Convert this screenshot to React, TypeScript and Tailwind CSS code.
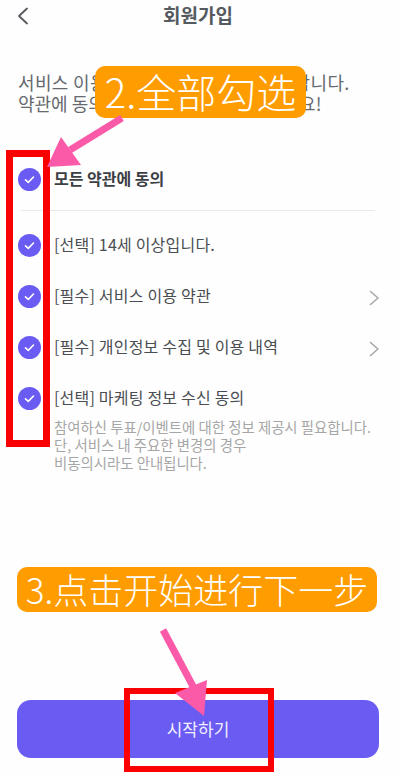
import React from "react";

const KR = "font-['Noto_Sans_CJK_KR','Noto_Sans',sans-serif]";

function Check() {
  return (
    <span className="flex h-[23px] w-[23px] shrink-0 items-center justify-center rounded-full bg-[#6a5cf2]">
      <svg width="13" height="13" viewBox="0 0 13 13" fill="none">
        <path d="M2.5 6.8 L5.3 9.4 L10.5 4" stroke="#fff" strokeWidth="1.6" strokeLinecap="round" strokeLinejoin="round" />
      </svg>
    </span>
  );
}

function Chevron() {
  return (
    <svg width="11" height="16" viewBox="0 0 11 16" fill="none" className="shrink-0">
      <path d="M1.5 1.5 L9 8 L1.5 14.5" stroke="#a8a8a8" strokeWidth="1.6" strokeLinecap="round" strokeLinejoin="round" />
    </svg>
  );
}

function Row({ label, chevron, className }: { label: string; chevron?: boolean; className: string }) {
  return (
    <div className={`flex h-[23px] items-center gap-[13px] ${className}`}>
      <Check />
      <span className="mb-[3px] flex-1 text-[16px] leading-[20px] tracking-[0.2px] text-[#4a4d52]">{label}</span>
      {chevron && <span className="mr-[20px] mt-[2px] flex"><Chevron /></span>}
    </div>
  );
}

export default function App() {
  return (
    <div className={`relative h-[775px] w-[400px] overflow-hidden bg-[#fefefe] ${KR}`}>
      <header className="relative flex h-[31px] items-center justify-center pb-[2px] pr-[4px]">
        <svg width="12" height="18" viewBox="0 0 12 18" fill="none" className="absolute left-[17px] top-[7px]">
          <path d="M10 1.5 L2 9 L10 16.5" stroke="#54585e" strokeWidth="1.8" strokeLinecap="round" strokeLinejoin="round" />
        </svg>
        <h1 className="text-[19px] font-bold leading-[20px] text-[#555a61]">회원가입</h1>
      </header>

      <p className="mt-[41px] whitespace-nowrap pl-[18px] text-[18px] leading-[21px] text-[#66696e]">
        <span className="tracking-[0.35px]">서비스 이용을 위해 약관 동의가 필요합니다.</span>
        <br />
        약관에 동의하고 서비스를 시작해 보세요!
      </p>

      <section className="mt-[54px] pl-[18px]">
        <div className="flex h-[23px] items-center gap-[13px]">
          <Check />
          <span className="mb-[3px] text-[16px] font-bold leading-[20px] text-[#3c3f44]">모든 약관에 동의</span>
        </div>
        <div className="ml-[3px] mt-[19px] mr-[25px] h-px bg-[#e9e9ec]" />
        <Row className="mt-[23px]" label="[선택] 14세 이상입니다." />
        <Row className="mt-[28px]" label="[필수] 서비스 이용 약관" chevron />
        <Row className="mt-[28px]" label="[필수] 개인정보 수집 및 이용 내역" chevron />
        <Row className="mt-[28px]" label="[선택] 마케팅 정보 수신 동의" />
        <p className="mt-[8px] whitespace-nowrap pl-[36px] text-[14.4px] leading-[18px] text-[#a6a6a6]">
          참여하신 투표/이벤트에 대한 정보 제공시 필요합니다.
          <br />
          단, 서비스 내 주요한 변경의 경우
          <br />
          비동의시라도 안내됩니다.
        </p>
      </section>

      <div className="absolute bottom-[17px] left-[17px] right-[21px]">
        <button className="flex h-[58px] w-full items-center justify-center rounded-[14px] bg-[#6a5cf2] text-[17px] text-[#f1effe]">
          시작하기
        </button>
      </div>

      {/* Tutorial overlays */}
      <div className="absolute left-[95px] top-[66px] flex h-[52px] w-[211px] items-center justify-center whitespace-nowrap rounded-[10px] bg-[#ff9c00] pb-[2px] text-[40px] font-light leading-none text-white font-['Noto_Sans_CJK_SC',sans-serif]">
        2.全部勾选
      </div>
      <div className="absolute left-[17px] top-[567px] flex h-[45px] w-[360px] items-center justify-center whitespace-nowrap rounded-[10px] bg-[#ff9c00] pb-[3px] text-[35px] font-light leading-none text-white font-['Noto_Sans_CJK_SC',sans-serif]">
        3.点击开始进行下一步
      </div>
      <div className="absolute left-[6px] top-[150px] h-[297px] w-[44px] border-[7px] border-[#fa0000]" />
      <div className="absolute left-[124px] top-[688px] h-[84px] w-[150px] border-[6px] border-[#fa0000]" />
      <svg className="absolute left-0 top-0" width="400" height="775" viewBox="0 0 400 775" fill="none">
        <path d="M122 118 L70 150" stroke="#fb5aa8" strokeWidth="7" />
        <path d="M47 167 L61 137 L81 165 Z" fill="#fb5aa8" />
        <path d="M163 630 L195 690" stroke="#fb5aa8" strokeWidth="7" />
        <path d="M204 716 L175 693 L207 680 Z" fill="#fb5aa8" />
      </svg>
    </div>
  );
}
